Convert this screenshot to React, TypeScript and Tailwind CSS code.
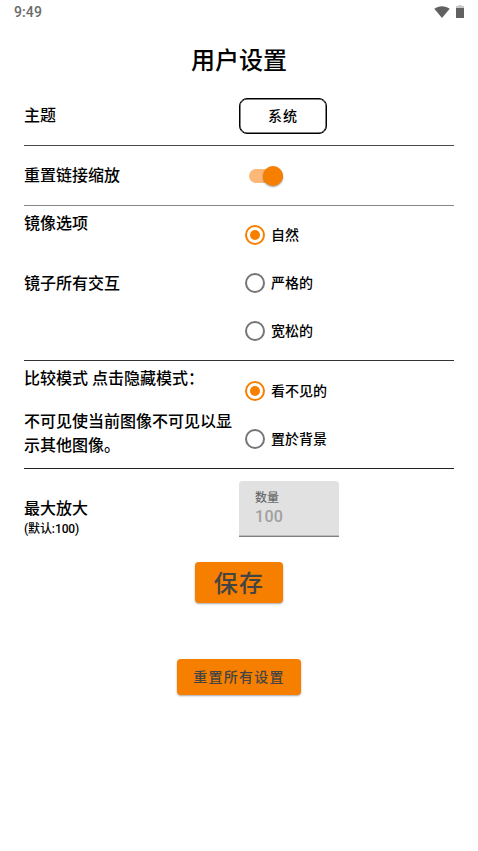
import { useState } from "react";

const fontClass = "font-['Roboto','Noto_Sans_CJK_SC',sans-serif]";

function StatusBar() {
  return (
    <div className="flex h-6 items-center justify-between pl-3.5 pr-[14px] text-[#6b6b6b]">
      <span className="text-[14px] leading-6 tracking-[0.1px]">9:49</span>
      <div className="flex items-center gap-[6px] text-[#616161]">
        <svg className="h-3 w-4" viewBox="0 0 16 12" fill="currentColor">
          <path d="M0.3 2.8C4.7-0.7 11.3-0.7 15.7 2.8L8 12Z" />
        </svg>
        <svg className="mb-[2px] h-[13px] w-2" viewBox="0 0 8 13">
          <path d="M2.5 0h3v1H8v3H0V1h2.5Z" fill="#c8c8c8" />
          <path d="M0 3h8v10H0Z" fill="currentColor" />
        </svg>
      </div>
    </div>
  );
}

function Radio({
  label,
  checked,
  onSelect,
}: {
  label: string;
  checked: boolean;
  onSelect: () => void;
}) {
  return (
    <button
      type="button"
      role="radio"
      aria-checked={checked}
      onClick={onSelect}
      className="flex h-12 items-center gap-[6px] pl-[6px] text-left"
    >
      <svg
        className={checked ? "size-5 text-[#f77f00]" : "size-5 text-[#757575]"}
        viewBox="0 0 20 20"
      >
        <circle cx="10" cy="10" r="9" fill="none" stroke="currentColor" strokeWidth="2" />
        {checked && <circle cx="10" cy="10" r="5" fill="currentColor" />}
      </svg>
      <span className="text-[14px] leading-5">{label}</span>
    </button>
  );
}

function RadioList({ options }: { options: string[] }) {
  const [selected, setSelected] = useState(options[0]);

  return (
    <div role="radiogroup" className="flex flex-col">
      {options.map((option) => (
        <Radio
          key={option}
          label={option}
          checked={option === selected}
          onSelect={() => setSelected(option)}
        />
      ))}
    </div>
  );
}

export default function App() {
  const [resetLinks, setResetLinks] = useState(true);

  return (
    <main className={`min-h-[851px] bg-white font-medium text-black ${fontClass}`}>
      <StatusBar />
      <h1 className="mt-[21px] text-center text-[24px] leading-8">用户设置</h1>

      <div className="mx-6 mt-[9px] text-[16px] leading-6">
        <section className="grid h-[60px] grid-cols-[215px_1fr] items-center border-b border-[#4a4a4a]">
          <span className="pt-px">主题</span>
          <button
            type="button"
            className="h-9 w-[88px] rounded-lg border border-black text-[14px] tracking-[1px] shadow-[inset_0_0_0_0.5px_#000]"
          >
            系统
          </button>
        </section>

        <section className="grid h-[60px] grid-cols-[215px_1fr] items-center border-b border-[#858585]">
          <span className="pt-px">重置链接缩放</span>
          <button
            type="button"
            role="switch"
            aria-checked={resetLinks}
            onClick={() => setResetLinks(!resetLinks)}
            className={`ml-2.5 flex h-[14px] w-[34px] items-center rounded-full ${
              resetLinks ? "justify-end bg-[#fbb877]" : "bg-gray-400"
            }`}
          >
            <span className="size-[20px] shrink-0 rounded-full bg-[#f77f00] shadow-[0_1px_2px_rgba(0,0,0,0.4)]" />
          </button>
        </section>

        <section className="grid h-[155px] grid-cols-[215px_1fr] border-b border-[#333]">
          <div className="flex flex-col gap-9 pt-1.5">
            <span>镜像选项</span>
            <span>镜子所有交互</span>
          </div>
          <div className="pt-[5px]">
            <RadioList options={["自然", "严格的", "宽松的"]} />
          </div>
        </section>

        <section className="grid h-[108px] grid-cols-[215px_1fr] border-b border-[#222]">
          <div className="flex flex-col gap-[19px] pt-1.5">
            <span>比较模式 点击隐藏模式：</span>
            <span>不可见使当前图像不可见以显示其他图像。</span>
          </div>
          <div className="pt-1.5">
            <RadioList options={["看不见的", "置於背景"]} />
          </div>
        </section>

        <section className="grid grid-cols-[215px_1fr] pt-3">
          <div className="flex flex-col pt-4">
            <span>最大放大</span>
            <span className="text-[12px] leading-4 tracking-[-0.1px]">(默认:100)</span>
          </div>
          <label className="flex h-14 w-[100px] flex-col rounded-t border-b border-[#808080] bg-[#e1e1e1] pl-4 pt-2 shadow-[inset_0_-1px_0_#bdbdbd]">
            <span className="pt-px text-[12px] leading-4 text-[#6b6b6b]">数量</span>
            <input
              defaultValue="100"
              className="-mt-px w-16 bg-transparent text-[16px] leading-6 tracking-[0.3px] text-[#a0a0a0] outline-none"
            />
          </label>
        </section>
      </div>

      <div className="mt-[25px] flex flex-col items-center gap-14 text-[#444]">
        <button
          type="button"
          className="h-[41px] w-[88px] rounded bg-[#f77f00] pt-0.5 text-[24px] leading-8 tracking-[1.25px] shadow-[0_1px_2px_rgba(0,0,0,0.35)]"
        >
          保存
        </button>
        <button
          type="button"
          className="h-9 w-[124px] rounded bg-[#f77f00] text-[14px] leading-5 tracking-[1.25px] shadow-[0_1px_2px_rgba(0,0,0,0.35)]"
        >
          重置所有设置
        </button>
      </div>
    </main>
  );
}
